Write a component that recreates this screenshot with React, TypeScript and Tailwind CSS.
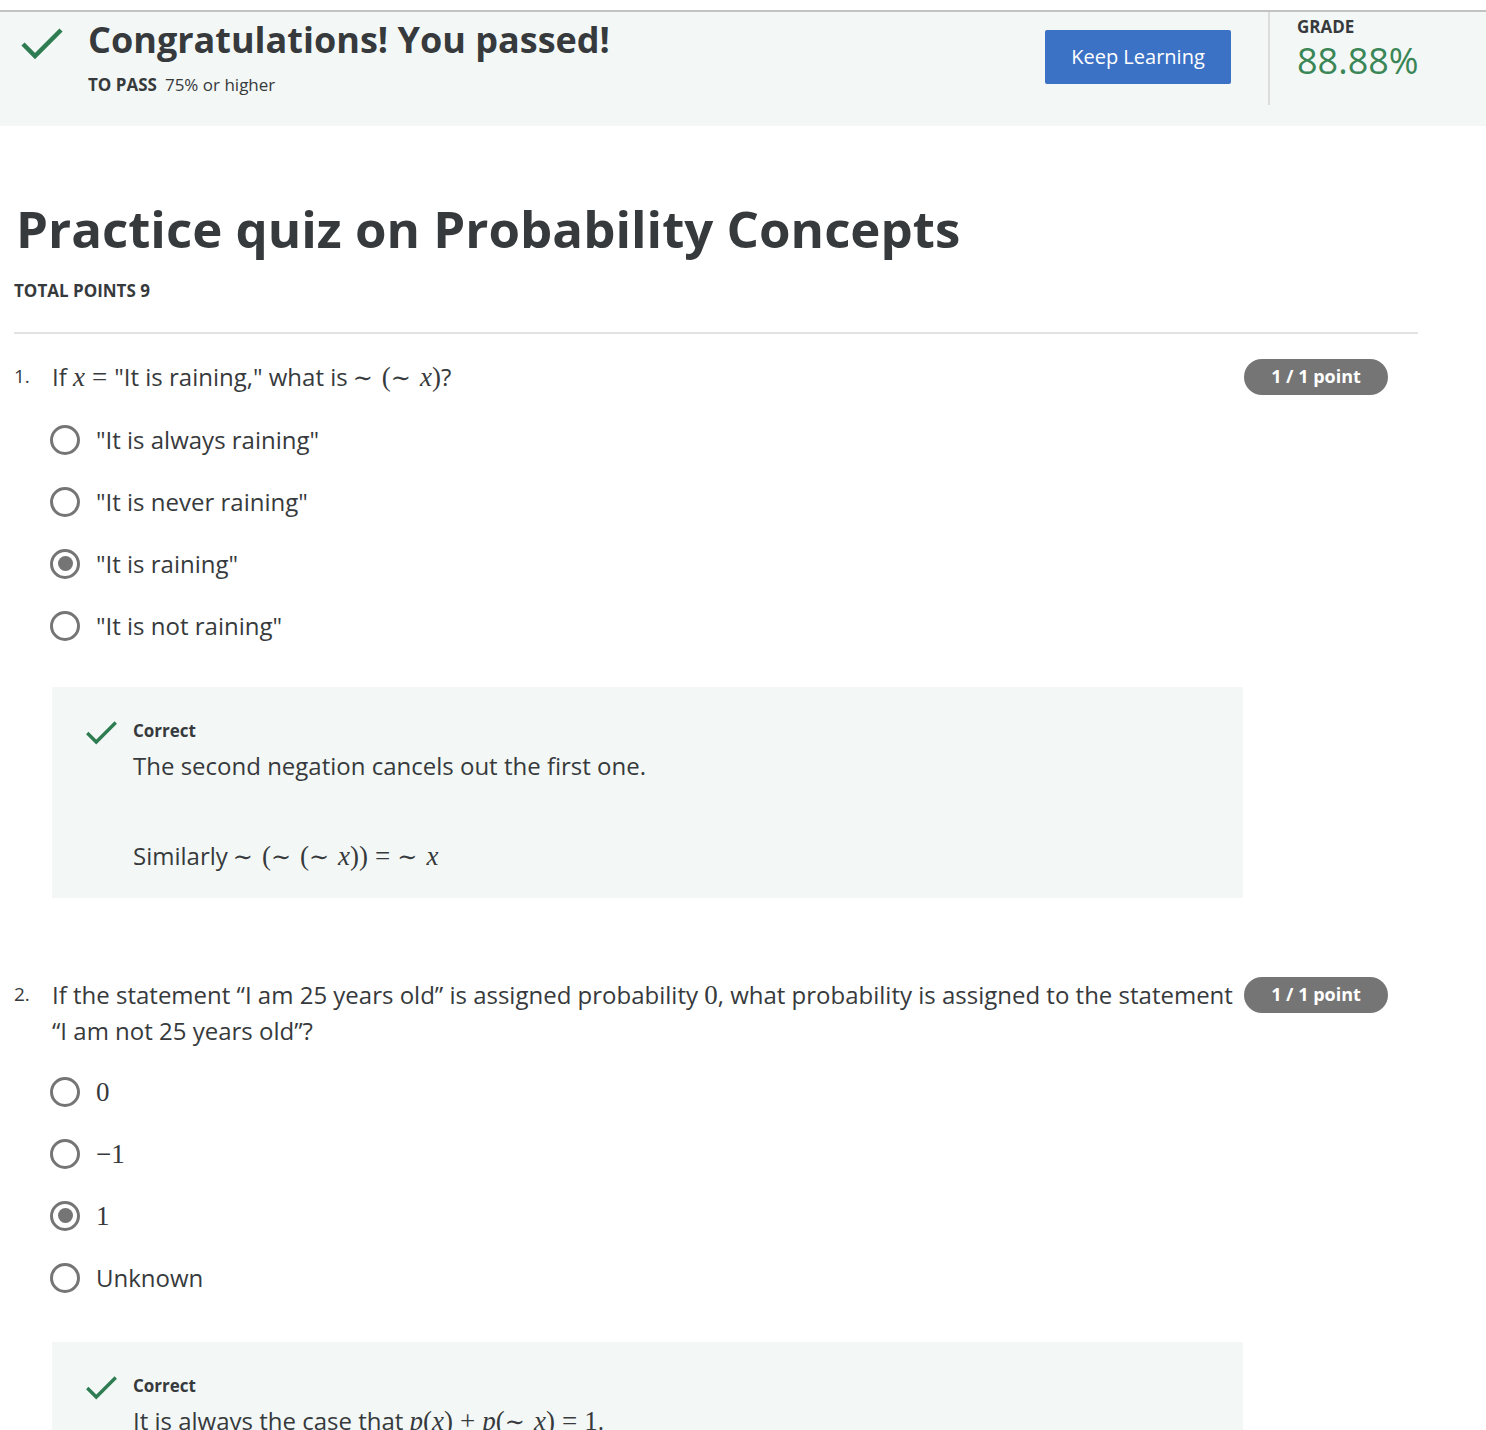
import React from 'react';

const M = ({ children, i }: { children: React.ReactNode; i?: boolean }) => (
  <span className={`font-['Liberation_Serif',serif] text-[27px] leading-none ${i ? 'italic' : ''}`}>{children}</span>
);

// relation symbol with katex-like spacing
const R = ({ children }: { children: React.ReactNode }) => (
  <span className="mx-[7px] font-['Liberation_Serif',serif] text-[27px] leading-none">{children}</span>
);

// the \sim operator
const T = ({ tight }: { tight?: boolean }) => (
  <span className={`${tight ? 'ml-0' : 'ml-[5px]'} mr-[9px] font-['DejaVu_Serif',serif] text-[24px] leading-none`}>∼</span>
);

const Check = ({ className }: { className?: string }) => (
  <svg viewBox="0 0 44 32" className={className} fill="none">
    <path d="M3 16 L15 28 L41 2" stroke="#2e7d52" strokeWidth="4.5" strokeLinecap="butt" />
  </svg>
);

const Radio = ({ checked }: { checked?: boolean }) => (
  <span className="flex h-[30px] w-[30px] shrink-0 items-center justify-center rounded-full border-[3px] border-[#757575]">
    {checked && <span className="h-[15px] w-[15px] rounded-full bg-[#757575]" />}
  </span>
);

const Option = ({ label, checked }: { label: React.ReactNode; checked?: boolean }) => (
  <div className="flex h-[62px] items-center gap-4 pl-[36px]">
    <Radio checked={checked} />
    <span className="text-[24px] text-[#373a3c]">{label}</span>
  </div>
);

const Badge = () => (
  <span className="ml-[10px] mr-[30px] flex h-9 w-[144px] shrink-0 items-center justify-center rounded-full bg-[#757575] text-[18px] font-bold text-white">
    1 / 1 point
  </span>
);

const Feedback = ({ children }: { children: React.ReactNode }) => (
  <div className="ml-[38px] w-[1191px] bg-[#f3f8f6] pb-[24px] pl-[33px] pt-[32px]">
    <div className="flex">
      <Check className="mt-[2px] h-[24px] w-[33px] shrink-0" />
      <div className="ml-[15px] text-[#373a3c]">
        <div className="text-[17px] font-bold leading-6">Correct</div>
        {children}
      </div>
    </div>
  </div>
);

export default function App() {
  return (
    <div className="min-h-[1430px] bg-white pt-[10px] font-['Open_Sans',sans-serif] text-[#373a3c]">
      {/* result banner */}
      <div className="flex h-[116px] border-t-2 border-[#c2c2c2] bg-[#f3f8f6]">
        <div className="flex flex-1 pl-5 pt-[4px]">
          <Check className="mt-[12px] h-[32px] w-[44px] shrink-0" />
          <div className="ml-[24px]">
            <h1 className="text-[36px] font-bold leading-[48px] text-[#373a3c]">Congratulations! You passed!</h1>
            <p className="mt-[8px] text-[17px]">
              <span className="font-bold">TO PASS</span>
              <span className="ml-2">75% or higher</span>
            </p>
          </div>
        </div>
        <button className="mt-[18px] h-[54px] w-[186px] rounded-[2px] bg-[#3b72c6] text-[20px] text-white">
          Keep Learning
        </button>
        <div className="ml-[37px] h-[93px] border-l-2 border-[#dcdcdc]" />
        <div className="w-[216px] pl-[27px] pt-[5px]">
          <div className="text-[17px] font-bold leading-5">GRADE</div>
          <div className="mt-[4px] text-[36px] leading-[40px] text-[#3b8657]">88.88%</div>
        </div>
      </div>

      <div className="w-[1418px] pl-[14px] pt-[71px]">
        <h2 className="pl-[2px] text-[51px] font-bold leading-[62px]">Practice quiz on Probability Concepts</h2>
        <p className="mt-[19px] text-[17px] font-bold">TOTAL POINTS 9</p>
        <hr className="mt-[28px] border-t-2 border-[#e2e2e2]" />

        {/* question 1 */}
        <div className="mt-[25px] flex">
          <span className="w-[38px] shrink-0 text-[19px] leading-[34px]">1.</span>
          <p className="flex-1 text-[24px] leading-[36px]">
            If <M i>x</M><R>=</R>"It is raining," what is<T /><M>(</M><T tight /><M i>x</M><M>)</M>?
          </p>
          <Badge />
        </div>
        <div className="mt-[14px]">
          <Option label={'"It is always raining"'} />
          <Option label={'"It is never raining"'} />
          <Option label={'"It is raining"'} checked />
          <Option label={'"It is not raining"'} />
        </div>
        <div className="mt-[30px]">
          <Feedback>
            <p className="mt-[5px] text-[24px] leading-[36px]">The second negation cancels out the first one.</p>
            <p className="mt-[54px] text-[24px] leading-[36px]">
              Similarly<T /><M>(</M><T tight /><M>(</M><T tight /><M i>x</M><M>))</M><R>=</R><T tight /><M i>x</M>
            </p>
          </Feedback>
        </div>

        {/* question 2 */}
        <div className="mt-[79px] flex">
          <span className="w-[38px] shrink-0 text-[19px] leading-[34px]">2.</span>
          <p className="flex-1 text-[24px] leading-[36px]">
            If the statement “I am 25 years old” is assigned probability <M>0</M>, what probability is assigned to the statement “I am not 25 years old”?
          </p>
          <Badge />
        </div>
        <div className="mt-[12px]">
          <Option label={<M>0</M>} />
          <Option label={<M>−1</M>} />
          <Option label={<M>1</M>} checked />
          <Option label="Unknown" />
        </div>
        <div className="mt-[33px]">
          <Feedback>
            <p className="mt-[5px] text-[24px] leading-[36px]">
              It is always the case that <M i>p</M><M>(</M><M i>x</M><M>)</M><R>+</R><M i>p</M><M>(</M><T tight /><M i>x</M><M>)</M><R>=</R><M>1</M>.
            </p>
          </Feedback>
        </div>
      </div>
    </div>
  );
}
